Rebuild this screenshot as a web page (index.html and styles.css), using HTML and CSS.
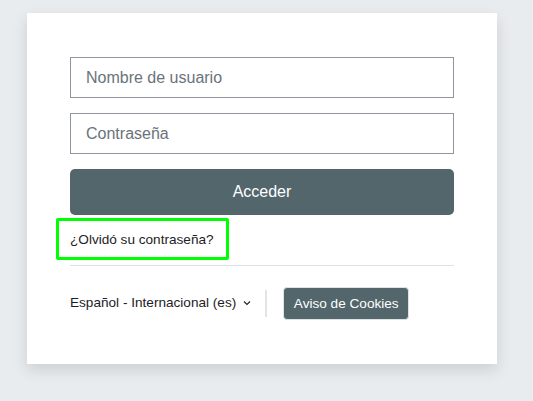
FILE: index.html
```html
<!DOCTYPE html>
<html lang="es">
<head>
<meta charset="utf-8">
<link rel="stylesheet" href="styles.css">
</head>
<body>
<div class="page">
  <div class="card">
    <form class="login">
      <input class="field" type="text" placeholder="Nombre de usuario">
      <input class="field" type="password" placeholder="Contraseña">
      <button class="btn-primary" type="button">Acceder</button>
    </form>
    <div class="forgot-row">
      <a class="forgot" href="#">¿Olvidó su contraseña?</a>
    </div>
    <div class="divider"></div>
    <div class="footer">
      <div class="lang">Español - Internacional (es)
        <svg class="chev" width="8" height="6" viewBox="0 0 8 6"><path d="M1 1.5 L4 4.5 L7 1.5" fill="none" stroke="#1d2125" stroke-width="1.1"/></svg>
      </div>
      <div class="vsep"></div>
      <button class="btn-cookies" type="button">Aviso de Cookies</button>
    </div>
  </div>
</div>
</body>
</html>
```
FILE: styles.css
```css
html, body {
  margin: 0;
  padding: 0;
}
body {
  background: #e9ecef;
  font-family: "Liberation Sans", Arial, sans-serif;
  color: #1d2125;
  height: 401px;
  overflow: hidden;
}
.page {
  padding: 13px 0 0 27px;
}
.card {
  box-sizing: border-box;
  width: 470px;
  height: 351px;
  background: #fff;
  box-shadow: 0 6px 14px rgba(0, 0, 0, 0.12);
  padding: 44px 43px 0 43px;
}
.login {
  display: flex;
  flex-direction: column;
}
.field {
  box-sizing: border-box;
  height: 41px;
  width: 384px;
  border: 1px solid #8f959e;
  border-radius: 0;
  padding: 0 15px;
  margin: 0 0 15px 0;
  font-family: inherit;
  font-size: 16px;
  color: #1d2125;
  outline: none;
}
.field::placeholder {
  color: #6a737b;
  opacity: 1;
}
.btn-primary {
  height: 46px;
  width: 384px;
  border: none;
  border-radius: 5px;
  background: #52666c;
  color: #fff;
  font-family: inherit;
  font-size: 16px;
  margin-top: 0;
  padding: 0;
}
.forgot-row {
  margin-top: 3px;
  margin-left: -14px;
  height: 42px;
}
.forgot {
  box-sizing: border-box;
  display: inline-block;
  height: 42px;
  padding: 10px 12px 0 11px;
  border: 3px solid #00ff00;
  border-radius: 2px;
  color: #1d2125;
  text-decoration: none;
  font-size: 13.6px;
  line-height: 17px;
}
.divider {
  height: 1px;
  background: #dee2e6;
  margin-top: 5px;
}
.footer {
  display: flex;
  align-items: center;
  margin-top: 21px;
  height: 33px;
}
.lang {
  font-size: 13.6px;
  color: #1d2125;
  display: flex;
  align-items: center;
  gap: 7px;
  margin-top: -3px;
}
.chev {
  display: block;
  margin-top: 1px;
}
.vsep {
  width: 2px;
  height: 27px;
  background: #e2e5e8;
  margin: 0 16px 0 14px;
}
.btn-cookies {
  box-sizing: border-box;
  height: 33px;
  width: 126px;
  border: 1px solid #dee2e6;
  border-radius: 4px;
  background: #52666c;
  color: #fff;
  font-family: inherit;
  font-size: 13.6px;
  font-weight: normal;
  padding: 0;
}
```
